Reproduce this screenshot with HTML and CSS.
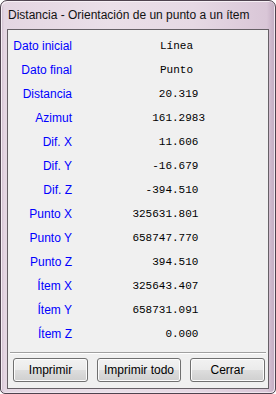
FILE: index.html
```html
<!DOCTYPE html>
<html lang="es">
<head>
<meta charset="utf-8">
<title>Distancia</title>
<link rel="stylesheet" href="styles.css">
</head>
<body>
<div class="window">
  <div class="titlebar">Distancia - Orientación de un punto a un ítem</div>
  <div class="client">
    <div class="rows">
      <div class="lbl">Dato inicial</div><div class="val txt">Línea</div>
      <div class="lbl">Dato final</div><div class="val txt">Punto</div>
      <div class="lbl">Distancia</div><div class="val n3">20.319</div>
      <div class="lbl">Azimut</div><div class="val">161.2983</div>
      <div class="lbl">Dif. X</div><div class="val n3">11.606</div>
      <div class="lbl">Dif. Y</div><div class="val n3">-16.679</div>
      <div class="lbl">Dif. Z</div><div class="val n3">-394.510</div>
      <div class="lbl">Punto X</div><div class="val n3">325631.801</div>
      <div class="lbl">Punto Y</div><div class="val n3">658747.770</div>
      <div class="lbl">Punto Z</div><div class="val n3">394.510</div>
      <div class="lbl">Ítem X</div><div class="val n3">325643.407</div>
      <div class="lbl">Ítem Y</div><div class="val n3">658731.091</div>
      <div class="lbl">Ítem Z</div><div class="val n3">0.000</div>
    </div>
    <div class="sep"></div>
    <div class="buttons">
      <button class="btn w75">Imprimir</button>
      <button class="btn w84">Imprimir todo</button>
      <button class="btn w75">Cerrar</button>
    </div>
  </div>
</div>
</body>
</html>
```

FILE: styles.css
```css
html, body {
  margin: 0;
  padding: 0;
  background: #ffffff;
}

body {
  width: 276px;
  height: 394px;
  overflow: hidden;
  font-family: "Liberation Sans", Arial, sans-serif;
  font-size: 12px;
}

.window {
  box-sizing: border-box;
  width: 276px;
  height: 394px;
  border: 1px solid #4f434f;
  border-radius: 7px 7px 5px 5px;
  background: linear-gradient(90deg, #c9b4c8 0px, #e4d6e2 3px, #eadfe8 40%, #e6d9e4 70%, #d9c6d7 97%, #c2abc1 100%);
  box-shadow: inset 1px 1px 0 #f6eff5, inset -1px -1px 0 #f0e6ef;
  display: flex;
  flex-direction: column;
}

.titlebar {
  height: 28px;
  display: flex;
  align-items: center;
  padding-left: 7px;
  color: #121212;
  white-space: nowrap;
}

.client {
  box-sizing: border-box;
  margin-left: 6px;
  width: 262px;
  height: 360px;
  border: 1px solid #666066;
  background: #f0f0f0;
  display: flex;
  flex-direction: column;
  padding: 4px 0 6px 0;
}

.rows {
  display: grid;
  grid-template-columns: 64px 133px;
  grid-auto-rows: 24px;
}

.lbl {
  color: #0000ff;
  text-align: right;
  line-height: 24px;
  white-space: nowrap;
}

.val {
  font-family: "Liberation Mono", "Courier New", monospace;
  font-size: 11px;
  line-height: 24px;
  text-align: right;
  color: #000000;
  white-space: nowrap;
}

.val.n3 {
  padding-right: 6.6px;
}

.val.txt {
  padding-right: 12px;
}

.sep {
  margin: 6px 2px 0 2px;
  border-top: 1px solid #a0a0a0;
  border-bottom: 1px solid #ffffff;
}

.buttons {
  display: flex;
  gap: 9px;
  padding-left: 5px;
  margin-top: 4px;
}

.btn {
  box-sizing: border-box;
  height: 24px;
  padding: 0;
  border: 1px solid #707070;
  border-radius: 3px;
  background: linear-gradient(180deg, #f2f2f2 0%, #ebebeb 48%, #dddddd 52%, #cfcfcf 100%);
  box-shadow: inset 0 0 0 1px #fcfcfc;
  font-family: "Liberation Sans", Arial, sans-serif;
  font-size: 12px;
  color: #000000;
}

.w75 {
  width: 75px;
}

.w84 {
  width: 84px;
}
```
